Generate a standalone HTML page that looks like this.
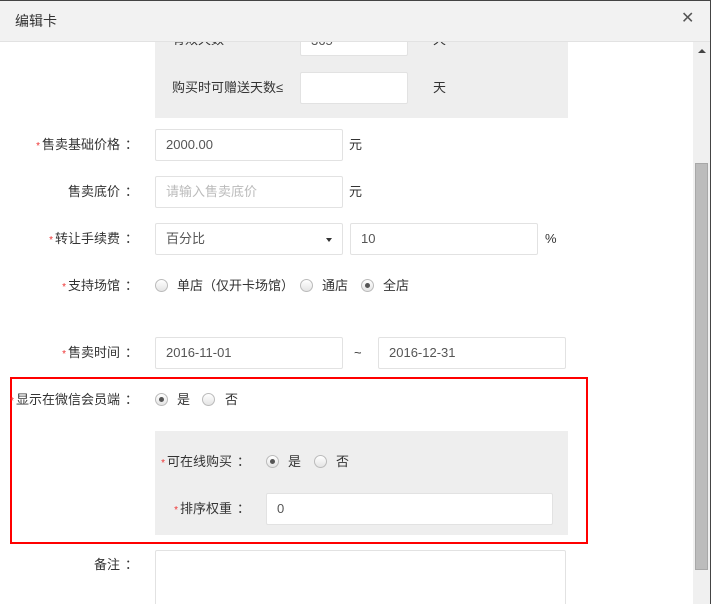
<!DOCTYPE html>
<html><head><meta charset="utf-8"><style>
*{box-sizing:border-box;margin:0;padding:0}
html,body{width:711px;height:604px;overflow:hidden}
body{position:relative;background:#fff;font-family:"Liberation Sans","Noto Sans CJK SC",sans-serif;font-size:13px;color:#333}
.a{position:absolute}
.in{position:absolute;background:#fff;border:1px solid #e2e2e2;border-radius:2px;height:32px;line-height:30px;padding-left:10px;color:#555}
.lb{position:absolute;text-align:right;width:138px;line-height:16px}
.lb i{color:#e33;font-style:normal;font-size:10px;margin-right:2px}
.lb b{font-weight:normal;margin-left:5px}
.t{position:absolute;line-height:16px}
.r{position:absolute;width:13px;height:13px;border-radius:50%;border:1px solid #bbb;background:linear-gradient(#fff,#e4e4e4)}
.r.c::after{content:"";position:absolute;left:3px;top:3px;width:5px;height:5px;border-radius:50%;background:#555}
.gp{background:#eee}
</style></head><body>
<div class="a gp" style="left:155px;top:30px;width:413px;height:88px"></div>
<div class="t" style="left:172px;top:32px">有效天数</div>
<div class="in" style="left:300px;top:25px;width:108px;height:31px;line-height:30px">365</div>
<div class="t" style="left:433px;top:32px">天</div>
<div class="a" style="left:0;top:0;width:711px;height:42px;background:#f2f2f2;border-top:1px solid #444;border-bottom:1px solid #e2e2e2"></div>
<div class="t" style="left:15px;top:13px;font-size:14px">编辑卡</div>
<div class="t" style="left:681px;top:11px;font-size:16px;color:#555">✕</div>
<div class="a" style="left:710px;top:0;width:1px;height:604px;background:#444"></div>
<div class="in" style="left:300px;top:72px;width:108px"></div>
<div class="t" style="left:172px;top:80px">购买时可赠送天数≤</div>
<div class="t" style="left:433px;top:80px">天</div>

<div class="lb" style="left:0;top:137px"><i>*</i>售卖基础价格<b>：</b></div>
<div class="in" style="left:155px;top:129px;width:188px">2000.00</div>
<div class="t" style="left:349px;top:137px">元</div>

<div class="lb" style="left:0;top:184px">售卖底价<b>：</b></div>
<div class="in" style="left:155px;top:176px;width:188px;color:#bbb">请输入售卖底价</div>
<div class="t" style="left:349px;top:184px">元</div>

<div class="lb" style="left:0;top:231px"><i>*</i>转让手续费<b>：</b></div>
<div class="in" style="left:155px;top:223px;width:188px">百分比</div>
<div class="a" style="left:326px;top:238px;border-left:3px solid transparent;border-right:3px solid transparent;border-top:4px solid #333"></div>
<div class="in" style="left:350px;top:223px;width:188px">10</div>
<div class="t" style="left:545px;top:231px">%</div>

<div class="lb" style="left:0;top:278px"><i>*</i>支持场馆<b>：</b></div>
<div class="r" style="left:155px;top:279px"></div><div class="t" style="left:177px;top:278px">单店（仅开卡场馆）</div>
<div class="r" style="left:300px;top:279px"></div><div class="t" style="left:322px;top:278px">通店</div>
<div class="r c" style="left:361px;top:279px"></div><div class="t" style="left:383px;top:278px">全店</div>

<div class="lb" style="left:0;top:345px"><i>*</i>售卖时间<b>：</b></div>
<div class="in" style="left:155px;top:337px;width:188px">2016-11-01</div>
<div class="t" style="left:354px;top:345px">~</div>
<div class="in" style="left:378px;top:337px;width:188px">2016-12-31</div>

<div class="a" style="left:10px;top:377px;width:578px;height:167px;border:2px solid #f00"></div>
<div class="lb" style="left:0;top:392px"><i>*</i>显示在微信会员端<b>：</b></div>
<div class="r c" style="left:155px;top:393px"></div><div class="t" style="left:177px;top:392px">是</div>
<div class="r" style="left:202px;top:393px"></div><div class="t" style="left:225px;top:392px">否</div>

<div class="a gp" style="left:155px;top:431px;width:413px;height:104px"></div>
<div class="lb" style="left:112px;top:454px"><i>*</i>可在线购买<b>：</b></div>
<div class="r c" style="left:266px;top:455px"></div><div class="t" style="left:288px;top:454px">是</div>
<div class="r" style="left:314px;top:455px"></div><div class="t" style="left:336px;top:454px">否</div>
<div class="lb" style="left:112px;top:501px"><i>*</i>排序权重<b>：</b></div>
<div class="in" style="left:266px;top:493px;width:287px">0</div>

<div class="lb" style="left:0;top:557px">备注<b>：</b></div>
<div class="in" style="left:155px;top:550px;width:411px;height:70px"></div>

<div class="a" style="left:693px;top:42px;width:17px;height:562px;background:#f0f0f0"></div>
<div class="a" style="left:698px;top:49px;border-left:4px solid transparent;border-right:4px solid transparent;border-bottom:4px solid #444"></div>
<div class="a" style="left:695px;top:163px;width:13px;height:407px;background:#bcbcbc;border:1px solid #a8a8a8"></div>
</body></html>
